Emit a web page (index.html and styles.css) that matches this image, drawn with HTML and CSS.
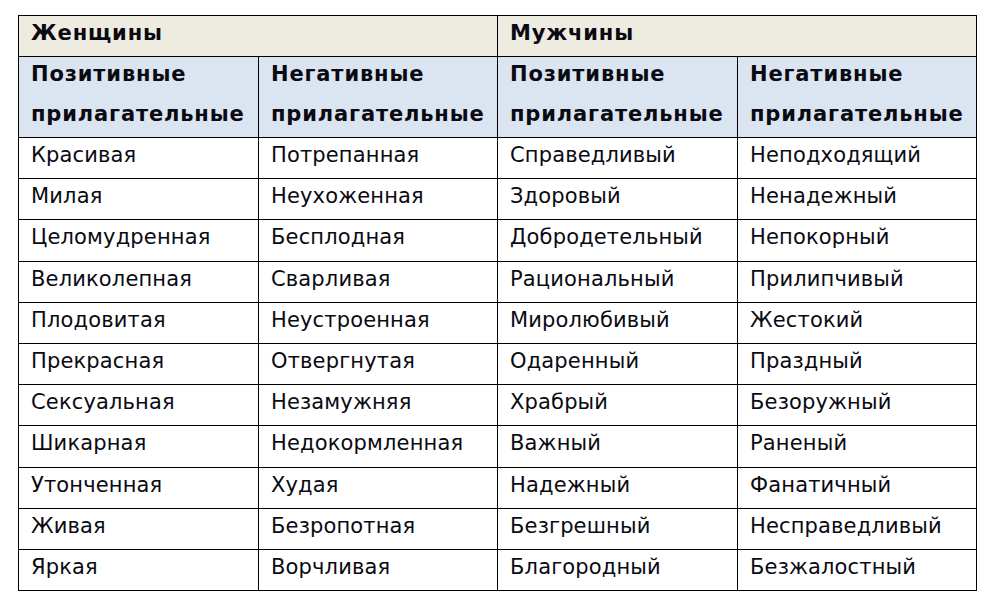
FILE: index.html
```html
<!DOCTYPE html>
<html lang="ru">
<head>
<meta charset="utf-8">
<link rel="stylesheet" href="styles.css">
</head>
<body>
<table class="adj">
  <colgroup>
    <col class="c1"><col class="c2"><col class="c3"><col class="c4">
  </colgroup>
  <thead>
    <tr class="group">
      <th colspan="2"><div class="t">Женщины</div></th>
      <th colspan="2"><div class="t">Мужчины</div></th>
    </tr>
    <tr class="sub">
      <th><div class="t">Позитивные прилагательные</div></th>
      <th><div class="t">Негативные прилагательные</div></th>
      <th><div class="t">Позитивные прилагательные</div></th>
      <th><div class="t">Негативные прилагательные</div></th>
    </tr>
  </thead>
  <tbody>
    <tr><td><div class="t">Красивая</div></td><td><div class="t">Потрепанная</div></td><td><div class="t">Справедливый</div></td><td><div class="t">Неподходящий</div></td></tr>
    <tr><td><div class="t">Милая</div></td><td><div class="t">Неухоженная</div></td><td><div class="t">Здоровый</div></td><td><div class="t">Ненадежный</div></td></tr>
    <tr><td><div class="t">Целомудренная</div></td><td><div class="t">Бесплодная</div></td><td><div class="t">Добродетельный</div></td><td><div class="t">Непокорный</div></td></tr>
    <tr><td><div class="t">Великолепная</div></td><td><div class="t">Сварливая</div></td><td><div class="t">Рациональный</div></td><td><div class="t">Прилипчивый</div></td></tr>
    <tr><td><div class="t">Плодовитая</div></td><td><div class="t">Неустроенная</div></td><td><div class="t">Миролюбивый</div></td><td><div class="t">Жестокий</div></td></tr>
    <tr><td><div class="t">Прекрасная</div></td><td><div class="t">Отвергнутая</div></td><td><div class="t">Одаренный</div></td><td><div class="t">Праздный</div></td></tr>
    <tr><td><div class="t">Сексуальная</div></td><td><div class="t">Незамужняя</div></td><td><div class="t">Храбрый</div></td><td><div class="t">Безоружный</div></td></tr>
    <tr><td><div class="t">Шикарная</div></td><td><div class="t">Недокормленная</div></td><td><div class="t">Важный</div></td><td><div class="t">Раненый</div></td></tr>
    <tr><td><div class="t">Утонченная</div></td><td><div class="t">Худая</div></td><td><div class="t">Надежный</div></td><td><div class="t">Фанатичный</div></td></tr>
    <tr><td><div class="t">Живая</div></td><td><div class="t">Безропотная</div></td><td><div class="t">Безгрешный</div></td><td><div class="t">Несправедливый</div></td></tr>
    <tr><td><div class="t">Яркая</div></td><td><div class="t">Ворчливая</div></td><td><div class="t">Благородный</div></td><td><div class="t">Безжалостный</div></td></tr>
  </tbody>
</table>
</body>
</html>
```
FILE: styles.css
```css
html, body {
  margin: 0;
  padding: 0;
  background: #ffffff;
}
body {
  padding: 15px 0 0 18px;
  font-family: "DejaVu Sans", Verdana, sans-serif;
  color: #0a0a12;
}
.adj {
  border-collapse: collapse;
  table-layout: fixed;
  width: 958px;
}
.c1 { width: 240px; }
.c2 { width: 239px; }
.c3 { width: 240px; }
.c4 { width: 239px; }
.adj th, .adj td {
  border: 1px solid #000;
  padding: 0 12px;
  text-align: left;
  vertical-align: top;
  font-size: 21px;
  line-height: 40px;
}
.adj th {
  font-weight: bold;
  letter-spacing: 0.85px;
}
.adj td {
  font-weight: normal;
  letter-spacing: 0.15px;
  line-height: 40.2px;
}
.t {
  margin: -3px 0 3px;
  white-space: normal;
}
.group th {
  background: #eeece1;
}
.sub th {
  background: #dbe5f1;
}
```
